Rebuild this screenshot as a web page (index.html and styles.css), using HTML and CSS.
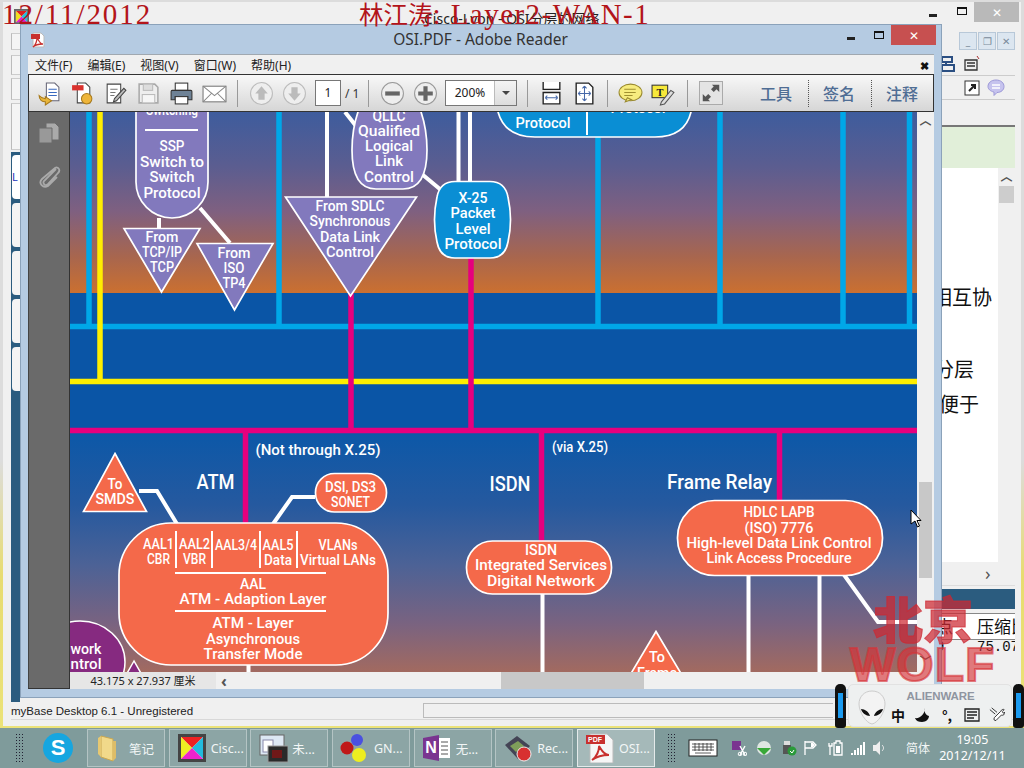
FILE: index.html
```html
<!DOCTYPE html>
<html lang="zh">
<head>
<meta charset="utf-8">
<title>OSI.PDF - Adobe Reader</title>
<link rel="stylesheet" href="styles.css">
</head>
<body>
<div class="desktop">

  <!-- background window: myBase -->
  <section class="win-main">
    <header class="main-title">
      <svg class="cisco-ico" viewBox="0 0 16 16"><rect width="16" height="16" fill="#666"/><rect x="2" y="2" width="12" height="12" fill="#eee"/><path d="M2 2h12L8 8z" fill="#e02020"/><path d="M2 2v12l6-6z" fill="#f0e020"/><path d="M14 2v12L8 8z" fill="#20c0e0"/><path d="M2 14h12L8 8z" fill="#e020d0"/></svg>
      <span class="main-title-text">Cisco-Lyon - OSI分层的网络</span>
      <div class="main-controls">
        <span class="ctl-min"></span><span class="ctl-max"></span><span class="ctl-close">✕</span>
      </div>
    </header>
    <div class="main-body">
      <aside class="left-col">
        <div class="left-row h1"></div>
        <div class="left-row h2"></div>
        <div class="left-row h3"></div>
        <div class="left-row h4"></div>
        <div class="tab-panel">
          <div class="tab t1">L</div><div class="tab"></div><div class="tab"></div><div class="tab"></div><div class="tab"></div>
        </div>
      </aside>
      <div class="main-gap"></div>
      <aside class="right-col">
        <div class="mdi-row"><span class="mdi">_</span><span class="mdi">❐</span><span class="mdi">✕</span></div>
        <div class="tool-row r1">
          <svg class="ri" viewBox="0 0 18 18"><path d="M2 2h10v5H2zM6 7v3M2 10h12v6H2z" fill="none" stroke="#2b4f82" stroke-width="2"/></svg>
          <svg class="ri" viewBox="0 0 18 18"><path d="M2 5h12v10H2zM4 8h8M4 11h8" fill="none" stroke="#333" stroke-width="1.3"/><path d="M14 1l2 3" stroke="#a33"/></svg>
        </div>
        <div class="tool-row r2">
          <svg class="ri" viewBox="0 0 18 18"><rect x="2" y="2" width="14" height="14" fill="#fff" stroke="#333"/><path d="M6 12l5-5M8 6h4v4" stroke="#222" stroke-width="2" fill="none"/></svg>
          <svg class="ri" viewBox="0 0 18 18"><path d="M9 1c5 0 8 3 8 6.500s-3 6-7 6l-3 3v-3.400C3 12 1 10 1 7.500 1 4 4 1 9 1z" fill="#c6c3ee" stroke="#9c98d8"/><path d="M5 6h8M5 9h8" stroke="#fff" stroke-width="1.500"/></svg>
        </div>
        <div class="tab-strip"></div>
        <div class="green-strip"></div>
        <div class="doc-row">
          <div class="doc-text">
            <p class="dl l1">相互协</p>
            <p class="dl l2">分层</p>
            <p class="dl l3">便于</p>
          </div>
          <div class="doc-scroll"><span class="chev">︿</span><span class="doc-thumb"></span></div>
        </div>
        <div class="h-scroll"><span class="chev-r">›</span></div>
        <div class="teal-bar"></div>
        <div class="tbl-head"><span class="c1">点</span><span class="c2">压缩比</span></div>
        <div class="tbl-row"><span class="c1">9</span><span class="c2">75.07</span></div>
      </aside>
    </div>
    <footer class="main-status">
      <span class="status-text">myBase Desktop 6.1 - Unregistered</span>
      <span class="status-field"></span>
    </footer>
  </section>

  <!-- foreground window: Adobe Reader -->
  <section class="win-pdf">
    <header class="pdf-title">
      <svg class="adobe-ico" viewBox="0 0 16 16"><path d="M3 1h8l3 3v11H3z" fill="#fff" stroke="#bbb"/><rect x="1" y="2" width="9" height="5" fill="#c8302e"/><path d="M3 15c3-2 4-7 4-9s2 6 6 6c-4 0-8 1-10 3z" fill="none" stroke="#c8302e" stroke-width="1.300"/></svg>
      <span class="pdf-title-text">OSI.PDF - Adobe Reader</span>
      <div class="pdf-controls"><span class="ctl-min"></span><span class="ctl-max"></span><span class="ctl-red">✕</span></div>
    </header>
    <nav class="menubar">
      <span>文件(F)</span><span>编辑(E)</span><span>视图(V)</span><span>窗口(W)</span><span>帮助(H)</span>
      <b class="menu-x">✖</b>
    </nav>
    <div class="toolbar">
      <button class="ib first"><svg viewBox="0 0 24 24"><path d="M9 2h8l4 4v13H9z" fill="#fff" stroke="#667"/><path d="M11 8h8M11 11h8M11 14h8" stroke="#3a6ac0"/><path d="M2 14c0 4 3 6 6 6v3l6-4-6-4v2c-2 0-4-1-6-3z" fill="#e9b63a" stroke="#a87a1c"/></svg></button>
      <button class="ib"><svg viewBox="0 0 24 24"><path d="M7 2h8l4 4v15H7z" fill="#fff" stroke="#444"/><rect x="2" y="4" width="11" height="5" fill="#d9322e"/><circle cx="16" cy="17" r="5" fill="#eeb53a" stroke="#a87a1c"/></svg></button>
      <button class="ib"><svg viewBox="0 0 24 24"><path d="M4 3h13v18H4z" fill="#fff" stroke="#444"/><path d="M7 8h7M7 11h5M7 14h4" stroke="#777"/><path d="M11 17l9-10 2 2-9 10-3 1z" fill="#bbb" stroke="#444"/></svg></button>
      <button class="ib"><svg viewBox="0 0 24 24"><path d="M3 3h15l3 3v15H3z" fill="#eee" stroke="#aaa" stroke-width="1.500"/><rect x="7" y="3" width="9" height="6" fill="#ddd" stroke="#bbb"/><rect x="6" y="13" width="12" height="8" fill="#f6f6f6" stroke="#bbb"/></svg></button>
      <button class="ib"><svg viewBox="0 0 24 24"><rect x="6" y="2" width="12" height="7" fill="#fff" stroke="#333"/><path d="M3 9h18a1 1 0 011 1v8h-4v-3H6v3H2v-8a1 1 0 011-1z" fill="#6e8296" stroke="#333"/><rect x="6" y="15" width="12" height="7" fill="#fff" stroke="#333"/></svg></button>
      <button class="ib"><svg viewBox="0 0 24 24"><rect x="1" y="5" width="22" height="15" fill="#fff" stroke="#777"/><path d="M1 5l11 9 11-9M1 20l8-8M23 20l-8-8" fill="none" stroke="#888"/></svg></button>
      <i class="sep m6"></i>
      <button class="ib m7"><svg viewBox="0 0 24 24"><circle cx="12" cy="12" r="10.500" fill="#eee" stroke="#bbb"/><path d="M12 5l6 7h-3v6H9v-6H6z" fill="#bbb"/></svg></button>
      <button class="ib"><svg viewBox="0 0 24 24"><circle cx="12" cy="12" r="10.500" fill="#eee" stroke="#bbb"/><path d="M12 19l6-7h-3V6H9v6H6z" fill="#bbb"/></svg></button>
      <span class="page-box">1</span>
      <span class="page-total">/ 1</span>
      <i class="sep m10"></i>
      <button class="ib m7"><svg viewBox="0 0 24 24"><circle cx="12" cy="12" r="10.500" fill="#eee" stroke="#999"/><rect x="5" y="10" width="14" height="4" fill="#666"/></svg></button>
      <button class="ib"><svg viewBox="0 0 24 24"><circle cx="12" cy="12" r="10.500" fill="#eee" stroke="#999"/><path d="M10 5h4v5h5v4h-5v5h-4v-5H5v-4h5z" fill="#666"/></svg></button>
      <span class="zoom-box"><span class="zoom-val">200%</span><span class="zoom-arrow"></span></span>
      <i class="sep m10"></i>
      <button class="ib m7"><svg viewBox="0 0 24 24"><path d="M4 1v7h16V1M4 11h16v11H4z" fill="#fff" stroke="#222" stroke-width="1.300"/><path d="M6 16h12M6 16l2-2M6 16l2 2M18 16l-2-2M18 16l-2 2" stroke="#4668a8" fill="none"/></svg></button>
      <button class="ib"><svg viewBox="0 0 24 24"><path d="M4 2h12l4 4v16H4z" fill="#fff" stroke="#222" stroke-width="1.300"/><path d="M12 5v14M6 12h12M12 5l-2 2M12 5l2 2M12 19l-2-2M12 19l2-2M6 12l2-2M6 12l2 2M18 12l-2-2M18 12l-2 2" stroke="#4668a8" fill="none"/></svg></button>
      <i class="sep m6"></i>
      <button class="ib m6"><svg viewBox="0 0 24 24"><ellipse cx="12" cy="11" rx="11" ry="8" fill="#f7ec7e" stroke="#9a8a30"/><path d="M7 20l2-4 4 2z" fill="#f7ec7e" stroke="#9a8a30"/><path d="M6 8h11M6 11h11M6 14h8" stroke="#a09030"/></svg></button>
      <button class="ib"><svg viewBox="0 0 24 24"><rect x="1" y="4" width="15" height="12" fill="#f7e83a" stroke="#333"/><text class="t-mark" x="8.500" y="14">T</text><path d="M10 20l9-11 3 2-9 11-4 1z" fill="#ddd" stroke="#555"/></svg></button>
      <i class="sep m7"></i>
      <span class="expand-box"><svg viewBox="0 0 24 24"><path d="M13 3h8v8l-3-3-3 3-3-3 3-3zM11 21H3v-8l3 3 3-3 3 3-3 3z" fill="#555"/></svg></span>
      <span class="tool-label m37">工具</span><i class="dots"></i>
      <span class="tool-label">签名</span><i class="dots"></i>
      <span class="tool-label">注释</span>
    </div>

    <div class="pdf-body">
      <aside class="nav-pane">
        <svg class="nav-ico" viewBox="0 0 24 24"><path d="M9 2h9l4 4v13H9z" fill="#aaa" stroke="#6a6a6a"/><path d="M2 7h13v15H2z" fill="#999" stroke="#6a6a6a"/></svg>
        <svg class="nav-ico clip" viewBox="0 0 24 24"><path d="M19 5L7 17a2.500 2.500 0 003.500 3.500L21 9c3-3 0-7-3-5L5 15c-4 4 1 10 6 7l9-9" fill="none" stroke="#aaa" stroke-width="1.800"/></svg>
      </aside>
      <div class="doc-area">
        <div class="doc-main">
          <div class="page-view">
<svg class="diagram" viewBox="70 112 847 560">
  <defs>
    <linearGradient id="sky" x1="0" y1="0" x2="0" y2="1">
      <stop offset="0" stop-color="#3e5c9d"/><stop offset=".3" stop-color="#5b5d90"/><stop offset=".55" stop-color="#7f6080"/><stop offset=".8" stop-color="#a8664e"/><stop offset="1" stop-color="#cb7030"/>
    </linearGradient>
    <linearGradient id="low" x1="0" y1="0" x2="0" y2="1">
      <stop offset="0" stop-color="#0c58a8"/><stop offset=".3" stop-color="#25599f"/><stop offset=".55" stop-color="#4c6296"/><stop offset=".8" stop-color="#7a6380"/><stop offset="1" stop-color="#a26a60"/>
    </linearGradient>
  </defs>
  <rect class="f-mid" x="70" y="293" width="847" height="140"/>
  <rect x="70" y="112" width="847" height="181" fill="url(#sky)"/>
  <rect x="70" y="433" width="847" height="239" fill="url(#low)"/>

  <path class="ln-cyan" d="M89 112V326M279 112V326M598 136V326M720 112V326M843 112V326M909.500 112V326M70 326.500H917"/>
  <path class="ln-yellow" d="M100 112V381.500M70 381.500H917"/>
  <path class="ln-pink" d="M351 293V431M471 255V431M70 430.500H917M245.500 431V525M541.500 431V541M779.500 431V501"/>
  <path class="ln-white" d="M327 112V198M458.500 112V183M470 112V183M345 112L356 126M423 175L441 190M159 218V229M200 208L230 243M139 491H157L177 524M273 524L292 497H315"/>
  <path class="ln-white" d="M542.500 594V672M748.500 576V672M819.500 576V672M842 572L878 622H917M248.500 665V672"/>

  <path class="n-purple" d="M136 110H208V182A36 36 0 01136 182Z"/>
  <path class="hr" d="M145 130H198"/>
  <text class="dt" x="172" y="110" textLength="52" lengthAdjust="spacingAndGlyphs">Switching</text>
  <text class="dt" x="172" y="146" textLength="25" lengthAdjust="spacingAndGlyphs">SSP</text>
  <text class="dt" x="172" y="162" textLength="64" lengthAdjust="spacingAndGlyphs">Switch to</text>
  <text class="dt" x="172" y="177" textLength="45" lengthAdjust="spacingAndGlyphs">Switch</text>
  <text class="dt" x="172" y="193" textLength="57" lengthAdjust="spacingAndGlyphs">Protocol</text>

  <path class="n-purple" d="M124 228.500H200L161.500 292Z"/>
  <text class="dt" x="162" y="237" textLength="33" lengthAdjust="spacingAndGlyphs">From</text>
  <text class="dt" x="162" y="252" textLength="40" lengthAdjust="spacingAndGlyphs">TCP/IP</text>
  <text class="dt" x="162" y="267" textLength="24" lengthAdjust="spacingAndGlyphs">TCP</text>
  <path class="n-purple" d="M197 243.500H273L234.500 310Z"/>
  <text class="dt" x="234" y="253" textLength="33" lengthAdjust="spacingAndGlyphs">From</text>
  <text class="dt" x="234" y="268" textLength="21" lengthAdjust="spacingAndGlyphs">ISO</text>
  <text class="dt" x="234" y="283" textLength="23" lengthAdjust="spacingAndGlyphs">TP4</text>

  <path class="n-purple" d="M361 104H418Q427 125 427 150Q427 189 403 189H376Q352 189 352 150Q352 125 361 104Z"/>
  <text class="dt" x="389" y="116" textLength="33" lengthAdjust="spacingAndGlyphs">QLLC</text>
  <text class="dt" x="389" y="131" textLength="62" lengthAdjust="spacingAndGlyphs">Qualified</text>
  <text class="dt" x="389" y="146" textLength="48" lengthAdjust="spacingAndGlyphs">Logical</text>
  <text class="dt" x="389" y="161" textLength="28" lengthAdjust="spacingAndGlyphs">Link</text>
  <text class="dt" x="389" y="177" textLength="50" lengthAdjust="spacingAndGlyphs">Control</text>

  <path class="n-purple" d="M285.500 197H416.500L350.500 296Z"/>
  <text class="dt" x="350" y="206" textLength="69" lengthAdjust="spacingAndGlyphs">From SDLC</text>
  <text class="dt" x="350" y="221" textLength="81" lengthAdjust="spacingAndGlyphs">Synchronous</text>
  <text class="dt" x="350" y="237" textLength="60" lengthAdjust="spacingAndGlyphs">Data Link</text>
  <text class="dt" x="350" y="252" textLength="48" lengthAdjust="spacingAndGlyphs">Control</text>

  <path class="n-blue" d="M455 181.500H490Q505 181.500 508 197Q513 220 508 242Q505 258 490 258H455Q440 258 437 242Q432 220 437 197Q440 181.500 455 181.500Z"/>
  <text class="dt" x="473" y="198" textLength="29" lengthAdjust="spacingAndGlyphs">X-25</text>
  <text class="dt" x="473" y="213" textLength="45" lengthAdjust="spacingAndGlyphs">Packet</text>
  <text class="dt" x="473" y="229" textLength="35" lengthAdjust="spacingAndGlyphs">Level</text>
  <text class="dt" x="473" y="244" textLength="57" lengthAdjust="spacingAndGlyphs">Protocol</text>

  <path class="n-blue" d="M498 100V112Q505 137 535 137H655Q685 137 691 112V100Z"/>
  <path class="hr" d="M587 104V135"/>
  <text class="dt" x="543" y="123" textLength="55" lengthAdjust="spacingAndGlyphs">Protocol</text>
  <text class="dt" x="638" y="108" textLength="55" lengthAdjust="spacingAndGlyphs">Protocol</text>

  <path class="n-orange" d="M115 453.500L146.500 511.500H83.500Z"/>
  <text class="dt" x="115" y="484" textLength="15" lengthAdjust="spacingAndGlyphs">To</text>
  <text class="dt" x="115" y="499" textLength="39" lengthAdjust="spacingAndGlyphs">SMDS</text>
  <text class="dh" x="215.500" y="482" textLength="38" lengthAdjust="spacingAndGlyphs">ATM</text>
  <text class="dt" x="318" y="450" textLength="125" lengthAdjust="spacingAndGlyphs">(Not through X.25)</text>

  <rect class="n-orange" x="315.500" y="473.500" width="71" height="38.500" rx="19"/>
  <text class="dt" x="350.500" y="487" textLength="51" lengthAdjust="spacingAndGlyphs">DSI, DS3</text>
  <text class="dt" x="350.500" y="502" textLength="39" lengthAdjust="spacingAndGlyphs">SONET</text>

  <rect class="n-orange" x="119" y="523" width="269" height="142" rx="52"/>
  <path class="hr" d="M176 531V568M212 531V568M260 531V568M297 531V568M175 573H326M175 611H326"/>
  <text class="dt" x="158.500" y="544" textLength="31" lengthAdjust="spacingAndGlyphs">AAL1</text>
  <text class="dt" x="158.500" y="559" textLength="23" lengthAdjust="spacingAndGlyphs">CBR</text>
  <text class="dt" x="194.500" y="544" textLength="31" lengthAdjust="spacingAndGlyphs">AAL2</text>
  <text class="dt" x="194.500" y="559" textLength="23" lengthAdjust="spacingAndGlyphs">VBR</text>
  <text class="dt" x="236" y="545" textLength="42" lengthAdjust="spacingAndGlyphs">AAL3/4</text>
  <text class="dt" x="278" y="545" textLength="31" lengthAdjust="spacingAndGlyphs">AAL5</text>
  <text class="dt" x="278" y="560" textLength="28" lengthAdjust="spacingAndGlyphs">Data</text>
  <text class="dt" x="338" y="545" textLength="39" lengthAdjust="spacingAndGlyphs">VLANs</text>
  <text class="dt" x="338" y="560" textLength="76" lengthAdjust="spacingAndGlyphs">Virtual LANs</text>
  <text class="dt" x="253" y="584" textLength="26" lengthAdjust="spacingAndGlyphs">AAL</text>
  <text class="dt" x="253" y="599" textLength="147" lengthAdjust="spacingAndGlyphs">ATM - Adaption Layer</text>
  <text class="dt" x="253" y="623" textLength="81" lengthAdjust="spacingAndGlyphs">ATM - Layer</text>
  <text class="dt" x="253" y="639" textLength="94" lengthAdjust="spacingAndGlyphs">Asynchronous</text>
  <text class="dt" x="253" y="654" textLength="99" lengthAdjust="spacingAndGlyphs">Transfer Mode</text>

  <ellipse class="n-violet" cx="80" cy="662" rx="45" ry="41"/>
  <text class="dt" x="86" y="649" textLength="31" lengthAdjust="spacingAndGlyphs">work</text>
  <text class="dt" x="86" y="664" textLength="31" lengthAdjust="spacingAndGlyphs">ntrol</text>
  <path class="n-violet" d="M134 661L122 682H146Z"/>

  <text class="dh" x="510" y="484" textLength="41" lengthAdjust="spacingAndGlyphs">ISDN</text>
  <text class="dt" x="580" y="447" textLength="56" lengthAdjust="spacingAndGlyphs">(via X.25)</text>
  <text class="dh" x="719.500" y="482" textLength="105" lengthAdjust="spacingAndGlyphs">Frame Relay</text>

  <rect class="n-orange" x="466.500" y="541" width="145" height="53" rx="26"/>
  <text class="dt" x="541" y="550" textLength="32" lengthAdjust="spacingAndGlyphs">ISDN</text>
  <text class="dt" x="541" y="565" textLength="132" lengthAdjust="spacingAndGlyphs">Integrated Services</text>
  <text class="dt" x="541" y="581" textLength="108" lengthAdjust="spacingAndGlyphs">Digital Network</text>

  <rect class="n-orange" x="677.500" y="500.500" width="205" height="75" rx="37"/>
  <text class="dt" x="779" y="512" textLength="71" lengthAdjust="spacingAndGlyphs">HDLC LAPB</text>
  <text class="dt" x="779" y="528" textLength="69" lengthAdjust="spacingAndGlyphs">(ISO) 7776</text>
  <text class="dt" x="779" y="543" textLength="185" lengthAdjust="spacingAndGlyphs">High-level Data Link Control</text>
  <text class="dt" x="779" y="558" textLength="145" lengthAdjust="spacingAndGlyphs">Link Access Procedure</text>

  <path class="n-orange" d="M656 631.500L698 702H614Z"/>
  <text class="dt" x="657" y="657" textLength="16" lengthAdjust="spacingAndGlyphs">To</text>
  <text class="dt" x="657" y="673" textLength="40" lengthAdjust="spacingAndGlyphs">Frame</text>
</svg>
          </div>
          <div class="v-scroll"><span class="chev up">︿</span><span class="v-thumb"></span><span class="chev down">﹀</span></div>
        </div>
        <div class="pdf-foot">
          <span class="page-size">43.175 x 27.937 厘米</span>
          <span class="foot-left">‹</span>
          <span class="foot-thumb"></span>
        </div>
      </div>
    </div>
  </section>

  <!-- overlays -->
  <div class="cap cap-date">12/11/2012</div>
  <div class="cap cap-title"><span class="cap-cn">林江涛</span>: Layer2-WAN-1</div>
  <div class="wm-cn">北京</div>
  <div class="wm-en">WOLF</div>
  <svg class="cursor" viewBox="0 0 12 19"><path d="M1 1v14l4-3 2.500 6 2-1-2.500-5.500H11z" fill="#fff" stroke="#000"/></svg>

  <div class="widget">
    <span class="pill"></span>
    <div class="w-panel">
      <svg class="alien" viewBox="0 0 28 36"><path d="M14 1c8 0 13 6 13 13 0 8-7 19-13 20C8 33 1 22 1 14 1 7 6 1 14 1z" fill="#f3f3f3" stroke="#ccc"/><path d="M3 19c4 0 8 3 9 7-4 0-8-3-9-7zM25 19c-4 0-8 3-9 7 4 0 8-3 9-7z" fill="#111"/></svg>
      <div class="w-right">
        <div class="w-brand">ALIENWARE</div>
        <div class="w-icons">
          <span class="w-i">中</span>
          <svg class="w-svg" viewBox="0 0 16 16"><path d="M10 1c-1 3 0 7 4 8 0 3-3 6-7 6-3 0-6-1-7-4 5 1 10-4 10-10z" fill="#111"/></svg>
          <span class="w-i">°,</span>
          <svg class="w-svg" viewBox="0 0 16 14"><path d="M1 1h14v12H1zM3 4h10M3 7h10M3 10h7" fill="none" stroke="#222" stroke-width="1.300"/></svg>
          <svg class="w-svg" viewBox="0 0 18 18"><path d="M1 3l6 5M3 1l6 5M6 12l7-7c1-2 3-3 4-2l-2 2 1 2 2-1c0 2-2 4-4 3l-6 6c-2 1-3-1-2-3z" fill="#fff" stroke="#222"/></svg>
        </div>
      </div>
    </div>
    <span class="pill"></span>
  </div>

  <!-- taskbar -->
  <footer class="taskbar">
    <i class="grip g1"></i>
    <span class="skype">S</span>
    <div class="tasks">
      <div class="task"><svg viewBox="0 0 30 30"><path d="M6 3l12 3v22l-12-4z" fill="#f1d98a" stroke="#caa850"/><path d="M3 5l3-2v21l-3-3z" fill="#e6c872"/><path d="M18 8h3v17l-3 3z" fill="#ddbd68"/></svg><span>笔记</span></div>
      <div class="task"><svg viewBox="0 0 30 30"><rect x="1" y="1" width="28" height="28" fill="#444"/><rect x="4" y="4" width="22" height="22" fill="#eee"/><path d="M4 4h22L15 15z" fill="#e22"/><path d="M4 4v22l11-11z" fill="#ee2"/><path d="M26 4v22L15 15z" fill="#2bd"/><path d="M4 26h22L15 15z" fill="#e2c"/></svg><span>Cisc...</span></div>
      <div class="task"><svg viewBox="0 0 30 30"><rect x="2" y="2" width="24" height="20" fill="#dde8f4" stroke="#666"/><rect x="5" y="7" width="10" height="12" fill="#fff" stroke="#88a"/><rect x="10" y="13" width="20" height="16" fill="#2a2a2a" stroke="#999"/><rect x="14" y="17" width="10" height="8" fill="#701818"/></svg><span>未...</span></div>
      <div class="task"><svg viewBox="0 0 30 30"><circle cx="17" cy="7" r="6" fill="#4a50e0"/><circle cx="7" cy="15" r="6.500" fill="#c01818"/><circle cx="19" cy="22" r="7" fill="#eeee20"/></svg><span>GN...</span></div>
      <div class="task"><svg viewBox="0 0 30 30"><path d="M1 5l16-3v26L1 25z" fill="#7a3590"/><rect x="17" y="5" width="11" height="20" fill="#fff"/><path d="M19 9h7M19 13h7M19 17h7M19 21h7" stroke="#555"/><text class="n-mark" x="9" y="20">N</text></svg><span>无...</span></div>
      <div class="task"><svg viewBox="0 0 30 30"><path d="M2 12L14 3l13 10-12 13z" fill="#445"/><path d="M7 13l8-5 6 5-8 6z" fill="#7f9e5a"/><circle cx="21" cy="21" r="7" fill="#d83030" stroke="#eee"/></svg><span>Rec...</span></div>
      <div class="task active"><svg viewBox="0 0 30 30"><path d="M5 1h17l6 6v23H5z" fill="#f6f6f6" stroke="#bbb"/><rect x="1" y="2" width="19" height="9" fill="#c8302e"/><text class="p-mark" x="10" y="9">PDF</text><path d="M7 27c5-3 7-10 7-13s3 8 10 8c-6 0-13 2-17 5z" fill="none" stroke="#c8302e" stroke-width="2"/></svg><span>OSI...</span></div>
    </div>
    <i class="grip g2"></i>
    <div class="tray">
      <svg class="kbd" viewBox="0 0 30 18"><rect x="1" y="1" width="28" height="16" fill="#fff" stroke="#222"/><path d="M4 5h22M4 8h22M4 11h22M7 14h16M7 4v8M11 4v8M15 4v8M19 4v8M23 4v8" stroke="#333" stroke-width=".8"/></svg>
      <svg class="tr-i n" viewBox="0 0 16 16"><rect x="1" y="1" width="9" height="9" fill="#7a3590"/><path d="M9 6l5 9M14 6l-5 9" stroke="#fff" stroke-width="1.400"/><circle cx="9" cy="14" r="1.800" fill="none" stroke="#fff"/><circle cx="14" cy="14" r="1.800" fill="none" stroke="#fff"/></svg>
      <svg class="tr-i g" viewBox="0 0 16 16"><circle cx="8" cy="8" r="7" fill="#dfe6e2"/><path d="M1 8h14l-7 7z" fill="#38a838"/></svg>
      <svg class="tr-i u" viewBox="0 0 16 16"><rect x="3" y="1" width="6" height="5" fill="#ddd"/><rect x="2" y="5" width="8" height="9" fill="#555"/><circle cx="11" cy="11" r="4.500" fill="#2a9a3a"/><path d="M9 11l2 2 2-3" stroke="#fff" fill="none"/></svg>
      <svg class="tr-i f" viewBox="0 0 16 16"><path d="M3 1v14M3 2h8l3 3-3 3H3" fill="none" stroke="#fff" stroke-width="1.300"/><path d="M9 3h2l2 2-2 2H9z" fill="#fff"/></svg>
      <svg class="tr-i b" viewBox="0 0 16 16"><path d="M2 3v3h3V3M3 6v9M9 1h4v2h2v12H7V3h2z" fill="none" stroke="#fff" stroke-width="1.300"/><rect x="9" y="6" width="4" height="7" fill="#fff"/></svg>
      <svg class="tr-i s" viewBox="0 0 16 16"><path d="M1 13v2M4 10v5M7 8v7M10 5v10M13 2v13" stroke="#fff" stroke-width="2"/></svg>
      <svg class="tr-i v" viewBox="0 0 16 16"><path d="M2 5h3l4-4v14l-4-4H2z" fill="#eee"/><path d="M11 5c2 2 2 4 0 6" stroke="#eee" fill="none"/></svg>
      <span class="ime">简体</span>
      <div class="clock"><span>19:05</span><span>2012/12/11</span></div>
    </div>
  </footer>
</div>
</body>
</html>
```
FILE: styles.css
```css
* { box-sizing: border-box; }
html, body { margin: 0; padding: 0; width: 1024px; height: 768px; overflow: hidden; }
body { font-family: "Noto Sans", "Noto Sans CJK SC", sans-serif; }
.desktop {
  position: relative; width: 1024px; height: 768px; overflow: hidden;
  background: linear-gradient(#dcdcdc 0, #dcdcdc 60%, #e8dc70 75%, #ece47a 100%);
}

/* main (background) window */
.win-main {
  position: absolute; left: 3px; top: 2px; width: 1018px; height: 724px;
  background: #f0f0f0; display: flex; flex-direction: column;
}
.main-title { height: 24px; flex: none; display: flex; align-items: center; position: relative; }
.cisco-ico { width: 15px; height: 15px; margin-left: 11px; margin-top: 5px; }
.main-title-text { position: absolute; left: 421px; top: 6px; font-size: 14px; color: #222; white-space: nowrap; }
.main-controls { position: absolute; right: 2px; top: 0; display: flex; align-items: center; }
.ctl-min { width: 8px; height: 3px; background: #222; display: block; }
.ctl-max { width: 10px; height: 8px; border: 1px solid #111; border-top-width: 2px; display: block; }
.main-controls .ctl-min { margin-right: 20px; margin-top: 7px; }
.main-controls .ctl-max { margin-right: 7px; margin-top: -3px; }
.ctl-close { width: 45px; height: 20px; background: #b9b9b9; color: #fff; font-size: 12px; display: flex; align-items: center; justify-content: center; }
.main-body { flex: 1; display: flex; min-height: 0; }
.left-col { width: 17px; padding-left: 8px; display: flex; flex-direction: column; }
.left-row { border-left: 1px solid #bbb; background: #f4f4f4; border-top: 1px solid #ccc; border-bottom: 1px solid #ccc; }
.left-row.h1 { height: 17px; margin-top: 7px; }
.left-row.h2 { height: 20px; margin-top: 5px; }
.left-row.h3 { height: 22px; margin-top: 3px; }
.left-row.h4 { height: 47px; margin-top: 3px; }
.tab-panel { flex: 1; margin-top: 2px; background: #2b5c7f; padding-top: 3px; display: flex; flex-direction: column; gap: 4px; padding-left: 1px; }
.tab { height: 44px; flex: none; background: #f4f4f4; border-radius: 4px 0 0 4px; font-size: 11px; color: #23b; overflow: hidden; }
.tab.t1 { background: #fff; padding-top: 14px; }
.main-gap { flex: 1; }
.right-col { width: 73px; margin-right: 6px; display: flex; flex-direction: column; background: #f0f0f0; overflow: hidden; }
.mdi-row { height: 26px; display: flex; justify-content: flex-end; gap: 1px; padding: 6px 0 0 0; }
.mdi { width: 18px; height: 18px; background: #dce6f0; border: 1px solid #b8c8d8; color: #7a8a9a; font-size: 10px; line-height: 16px; text-align: center; }
.tool-row { height: 24px; display: flex; padding-top: 3px; border-bottom: 1px solid #ccc; }
.tool-row.r1 { gap: 5px; margin-left: -2px; }
.tool-row.r2 { gap: 6px; padding-left: 21px; }
.ri { width: 18px; height: 18px; }
.tab-strip { height: 27px; border-bottom: 2px solid #777; }
.green-strip { height: 41px; background: #e1efd9; }
.doc-row { height: 394px; display: flex; }
.doc-text { flex: 1; background: #fff; position: relative; overflow: hidden; }
.dl { margin: 0; font-size: 20px; line-height: 24px; color: #111; white-space: nowrap; position: absolute; }
.dl.l1 { left: -10px; top: 118px; }
.dl.l2 { left: -8px; top: 190px; }
.dl.l3 { left: -3px; top: 225px; }
.doc-scroll { width: 17px; display: flex; flex-direction: column; align-items: center; background: #f0f0f0; }
.chev { font-size: 12px; line-height: 18px; height: 18px; color: #555; font-weight: 700; }
.doc-thumb { width: 15px; height: 17px; background: #cdcdcd; }
.h-scroll { height: 24px; border-bottom: 1px solid #ddd; font-size: 18px; line-height: 22px; color: #555; padding-left: 43px; }
.teal-bar { height: 20px; margin-top: 3px; background: #2b5c7f; }
.tbl-head { height: 27px; margin-top: 4px; border-top: 1px solid #888; border-bottom: 1px solid #888; display: flex; font-size: 17px; line-height: 25px; color: #111; background: #fff; overflow: hidden; }
.tbl-row { height: 15px; display: flex; background: #f0f0f0; font-family: "Liberation Mono", monospace; font-size: 14px; line-height: 15px; color: #111; overflow: hidden; }
.c1 { width: 35px; flex: none; overflow: hidden; text-indent: -6px; }
.c2 { white-space: nowrap; }
.main-status { height: 18px; margin: 0 7px 6px 8px; flex: none; display: flex; align-items: center; border-bottom: 1px solid #d8d8d8; }
.status-text { font: 11.500px "Liberation Sans", sans-serif; color: #222; width: 412px; flex: none; }
.status-field { width: 410px; height: 15px; border: 1px solid #bbb; border-right: 0; flex: none; }

/* Adobe Reader window */
.win-pdf {
  position: absolute; left: 20px; top: 24px; width: 922px; height: 674px;
  background: #b5cbe2; border: 1px solid #8ba2ba; display: flex; flex-direction: column;
  padding: 0 7px 8px 7px;
}
.pdf-title { height: 29px; flex: none; position: relative; display: flex; align-items: center; justify-content: center; }
.adobe-ico { position: absolute; left: 2px; top: 7px; width: 16px; height: 16px; }
.pdf-title-text { font-size: 15.500px; line-height: 28px; color: #333; margin-right: 1px; margin-top: -2px; }
.pdf-controls { position: absolute; right: -2px; top: 0; display: flex; }
.pdf-controls .ctl-min { margin-right: 19px; margin-top: 12px; }
.pdf-controls .ctl-max { margin-right: 7px; margin-top: 6px; }
.ctl-red { width: 45px; height: 20px; background: #c75050; color: #fff; font-size: 12px; display: flex; align-items: center; justify-content: center; }
.menubar { height: 20px; flex: none; background: #f0f0f0; border-top: 1px solid #a0a8b0; display: flex; align-items: center; gap: 15px; padding-left: 7px; font-size: 12px; color: #222; position: relative; white-space: nowrap; }
.menu-x { position: absolute; right: 5px; top: 3px; font-size: 11px; color: #111; }
.toolbar { height: 38px; flex: none; background: linear-gradient(#f8f8f8, #d6d6d6); border: 1px solid #333; display: flex; align-items: center; padding-left: 4px; }
.ib { width: 33px; height: 26px; flex: none; padding: 0; border: 0; background: none; display: flex; align-items: center; justify-content: center; }
.ib svg { width: 25px; height: 25px; }
.sep { width: 1px; height: 27px; background: #999; flex: none; }
.m6 { margin-left: 6px; } .m7 { margin-left: 7px; } .m10 { margin-left: 10px; } .m37 { margin-left: 37px; }
.page-box { width: 26px; height: 26px; margin-left: 4px; border: 1px solid #777; background: #fff; font-size: 12px; line-height: 24px; text-align: center; color: #222; flex: none; }
.page-total { width: 13px; margin-left: 4px; font-size: 12px; color: #333; flex: none; white-space: nowrap; }
.zoom-box { width: 72px; height: 26px; margin-left: 3px; border: 1px solid #777; display: flex; background: #fff; flex: none; }
.zoom-val { flex: 1; font-size: 12px; line-height: 24px; text-align: center; color: #222; }
.zoom-arrow { width: 22px; background: linear-gradient(#f4f4f4, #ddd) ; border-left: 1px solid #bbb; position: relative; }
.zoom-arrow::after { content: ""; position: absolute; left: 7px; top: 10px; border: 4px solid transparent; border-top: 4px solid #444; }
.expand-box { width: 24px; height: 24px; margin-left: 11px; border: 1px solid #aaa; background: #e4e4e4; flex: none; }
.expand-box svg { display: block; width: 22px; height: 22px; }
.tool-label { width: 35px; flex: none; font-size: 16px; font-weight: 500; color: #4f6d94; white-space: nowrap; font-family: "Noto Sans CJK SC", sans-serif; }
.dots { width: 1px; height: 27px; margin: 0 14px 0 13px; border-left: 1px dotted #555; flex: none; }
.pdf-body { flex: 1; display: flex; min-height: 0; }
.nav-pane { width: 42px; flex: none; background: #6a6a6a; border-right: 1px solid #333; border-left: 1px solid #444; border-bottom: 1px solid #333; display: flex; flex-direction: column; align-items: center; padding-top: 8px; gap: 17px; }
.nav-ico { width: 24px; height: 26px; }
.doc-area { flex: 1; min-width: 0; display: flex; flex-direction: column; }
.doc-main { flex: 1; min-height: 0; display: flex; }
.page-view { width: 847px; height: 560px; overflow: hidden; flex: none; }
.diagram { display: block; width: 847px; height: 560px; }
.v-scroll { flex: 1; background: #f0f0f0; position: relative; text-align: center; }
.v-scroll .chev { position: absolute; left: 0; right: 0; font-size: 12px; }
.chev.up { top: 0; } .chev.down { bottom: 1px; }
.v-thumb { position: absolute; left: 2px; width: 13px; top: 370px; height: 96px; background: #c8c8c8; }
.pdf-foot { height: 17px; flex: none; background: #f0f0f0; display: flex; align-items: center; position: relative; }
.page-size { width: 146px; height: 17px; background: #e6e6e6; font-size: 11px; line-height: 17px; text-align: center; color: #222; }
.foot-left { margin-left: 5px; font-size: 16px; line-height: 14px; font-weight: 700; color: #555; }
.foot-thumb { position: absolute; left: 431px; top: 0; width: 143px; height: 17px; background: #c8c8c8; }

/* diagram */
.f-mid { fill: #0a55a6; }
.ln-cyan { stroke: #00a7e8; stroke-width: 5.500; fill: none; }
.ln-yellow { stroke: #ffee00; stroke-width: 5.500; fill: none; }
.ln-pink { stroke: #e6007e; stroke-width: 5.500; fill: none; }
.ln-white { stroke: #fff; stroke-width: 4; fill: none; }
.n-purple { fill: #8279bd; stroke: #fff; stroke-width: 1.700; }
.n-blue { fill: #0a8ed4; stroke: #fff; stroke-width: 1.700; }
.n-orange { fill: #f4694a; stroke: #fff; stroke-width: 1.700; }
.n-violet { fill: #862a80; stroke: #fff; stroke-width: 1.500; }
.hr { stroke: #fff; stroke-width: 2; fill: none; }
.dt { font-family: "Roboto", sans-serif; font-weight: 500; font-size: 15px; fill: #fff; text-anchor: middle; dominant-baseline: central; }
.dh { font-family: "Roboto", sans-serif; font-weight: 500; font-size: 20px; fill: #fff; text-anchor: middle; dominant-baseline: central; }
.t-mark { font: 700 10px "Liberation Serif", serif; text-anchor: middle; fill: #222; }
.n-mark { font: 700 16px "Liberation Sans", sans-serif; text-anchor: middle; fill: #fff; }
.p-mark { font: 700 7px "Liberation Sans", sans-serif; text-anchor: middle; fill: #fff; }

/* captions and watermark */
.cap { position: absolute; top: -3px; font-family: "Liberation Serif", "Noto Sans CJK SC", serif; font-size: 29px; line-height: 34px; color: #b3141a; white-space: nowrap; }
.cap-date { left: 2px; letter-spacing: 1.900px; }
.cap-title { left: 359px; letter-spacing: 1.450px; }
.cap-cn { font-family: "Noto Sans CJK SC", sans-serif; font-size: 24.500px; letter-spacing: 0; }
.wm-cn { position: absolute; left: 873px; top: 585px; font: 900 50px/64px "Noto Sans CJK SC", sans-serif; color: rgba(205, 40, 50, .72); white-space: nowrap; -webkit-text-stroke: 1px rgba(205, 40, 50, .72); }
.wm-en { position: absolute; left: 850px; top: 637px; font: 700 48px/56px "Liberation Sans", sans-serif; color: rgba(215, 50, 55, .65); letter-spacing: 1px; -webkit-text-stroke: 2px rgba(215, 50, 55, .65); }
.cursor { position: absolute; left: 910px; top: 509px; width: 12px; height: 19px; }

/* alienware widget */
.widget { position: absolute; left: 835px; top: 683px; width: 189px; height: 45px; display: flex; align-items: center; justify-content: space-between; }
.pill { width: 11px; height: 44px; background: #111; border-radius: 5px 5px 3px 3px; position: relative; }
.pill::after { content: ""; position: absolute; left: 3px; top: 9px; width: 5px; height: 25px; background: #1a9af0; }
.w-panel { width: 164px; height: 43px; background: #eef0f0; border-radius: 5px; border: 1px solid #e2e2e2; display: flex; }
.alien { width: 28px; height: 36px; margin: 5px 0 0 9px; flex: none; }
.w-right { flex: 1; display: flex; flex-direction: column; }
.w-brand { font: 700 11.500px/14px "Liberation Sans", sans-serif; letter-spacing: -.1px; color: #8f95a0; text-align: left; padding: 4px 0 0 21px; white-space: nowrap; }
.w-icons { display: flex; align-items: center; gap: 9px; padding: 3px 0 0 5px; }
.w-i { width: 15px; font: 700 14px/18px "Noto Sans CJK SC", sans-serif; color: #111; text-align: center; flex: none; }
.w-svg { width: 16px; height: 16px; flex: none; }

/* taskbar */
.taskbar { position: absolute; left: 0; top: 728px; width: 1024px; height: 40px; background: #7f9b9b; display: flex; align-items: center; color: #eef; }
.grip { width: 8px; height: 30px; flex: none; background-image: radial-gradient(#223 40%, transparent 45%); background-size: 3px 3px; }
.g1 { margin-left: 15px; }
.skype { width: 30px; height: 30px; margin-left: 20px; border-radius: 50%; background: #16a6e0; color: #fff; font: 700 22px/30px "Liberation Sans", sans-serif; text-align: center; flex: none; }
.tasks { display: flex; gap: 3.670px; margin-left: 14px; }
.task { width: 78px; height: 38px; border: 1px solid rgba(255, 255, 255, .35); background: rgba(255, 255, 255, .1); display: flex; align-items: center; gap: 4px; padding-left: 7px; font-size: 12.500px; color: #f2f6f6; white-space: nowrap; overflow: hidden; }
.task svg { width: 30px; height: 30px; flex: none; }
.task.active { background: rgba(255, 255, 255, .3); border-color: rgba(255, 255, 255, .7); }
.g2 { margin-left: 12px; }
.tray { display: flex; align-items: center; margin-left: 13px; }
.kbd { width: 30px; height: 18px; flex: none; }
.tr-i { width: 16px; height: 16px; flex: none; margin-left: 7px; }
.tr-i.n { margin-left: 13px; } .tr-i.g { margin-left: 9px; } .tr-i.u { margin-left: 9px; } .tr-i.f { margin-left: 5px; } .tr-i.b { margin-left: 9px; } .tr-i.s { margin-left: 8px; } .tr-i.v { margin-left: 4px; }
.ime { margin-left: 19px; font-size: 12px; width: 24px; white-space: nowrap; flex: none; color: #f2f6f6; }
.clock { margin-left: 10px; width: 65px; display: flex; flex-direction: column; align-items: center; font-size: 12.500px; line-height: 16px; color: #fff; white-space: nowrap; }
```
